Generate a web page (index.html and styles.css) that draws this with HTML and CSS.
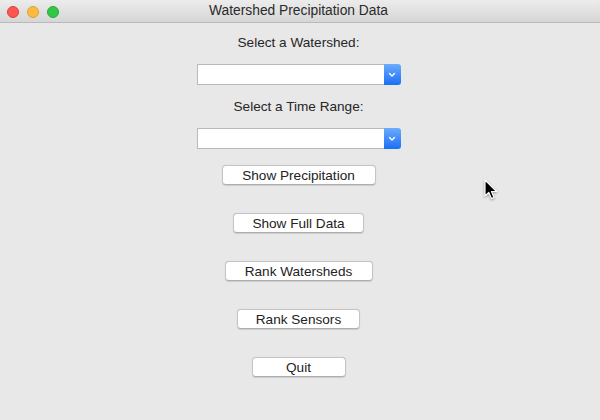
FILE: index.html
```html
<!DOCTYPE html>
<html>
<head>
<meta charset="utf-8">
<title>Watershed Precipitation Data</title>
<link rel="stylesheet" href="styles.css">
</head>
<body>
<div class="window">
  <div class="titlebar">
    <div class="lights">
      <span class="light red"></span>
      <span class="light yellow"></span>
      <span class="light green"></span>
    </div>
    <div class="title">Watershed Precipitation Data</div>
  </div>
  <div class="content">
    <div class="label first">Select a Watershed:</div>
    <div class="combo">
      <div class="combo-field"></div>
      <div class="combo-arrow">
        <svg width="8" height="6" viewBox="0 0 8 6"><path d="M1.5 1.5 L4 4 L6.5 1.5" fill="none" stroke="#fff" stroke-width="1.4" stroke-linecap="round" stroke-linejoin="round"/></svg>
      </div>
    </div>
    <div class="label second">Select a Time Range:</div>
    <div class="combo">
      <div class="combo-field"></div>
      <div class="combo-arrow">
        <svg width="8" height="6" viewBox="0 0 8 6"><path d="M1.5 1.5 L4 4 L6.5 1.5" fill="none" stroke="#fff" stroke-width="1.4" stroke-linecap="round" stroke-linejoin="round"/></svg>
      </div>
    </div>
    <div class="buttons">
      <button class="btn btn-precip">Show Precipitation</button>
      <button class="btn btn-full">Show Full Data</button>
      <button class="btn btn-rankw">Rank Watersheds</button>
      <button class="btn btn-ranks">Rank Sensors</button>
      <button class="btn btn-quit">Quit</button>
    </div>
  </div>
  <svg class="cursor" width="16" height="24" viewBox="0 0 16 24">
    <path d="M1 1 L1 17 L4.8 13.4 L7.4 19.6 L10 18.5 L7.5 12.5 L12.6 12.5 Z" fill="#000" stroke="#fff" stroke-width="1.2" stroke-linejoin="round"/>
  </svg>
</div>
</body>
</html>
```
FILE: styles.css
```css
html, body {
  margin: 0;
  padding: 0;
  background: #e8e8e8;
}
.window {
  position: relative;
  width: 600px;
  height: 420px;
  background: #e8e8e8;
  border-radius: 5px 5px 0 0;
  overflow: hidden;
  font-family: "Liberation Sans", Arial, sans-serif;
  font-size: 13.6px;
  color: #222;
}
.titlebar {
  position: relative;
  height: 22px;
  background: linear-gradient(#ececec, #d6d6d6);
  border-bottom: 1px solid #b9b9b9;
  display: flex;
  align-items: center;
  justify-content: center;
}
.lights {
  position: absolute;
  left: 7px;
  top: 6px;
  display: flex;
  gap: 8px;
}
.light {
  width: 12px;
  height: 12px;
  border-radius: 50%;
  box-sizing: border-box;
}
.red { background: #fc5753; border: 1px solid #df3d38; }
.yellow { background: #fdbc40; border: 1px solid #de9f34; }
.green { background: #33c748; border: 1px solid #27aa35; }
.title {
  font-size: 13.8px;
  color: #2a2a2a;
  line-height: 22px;
  margin-right: 3px;
}
.content {
  display: flex;
  flex-direction: column;
  align-items: center;
  padding-right: 3px;
}
.label {
  line-height: 16px;
  color: #262626;
}
.label.first { margin-top: 12px; margin-bottom: 13px; }
.label.second { margin-top: 14px; margin-bottom: 13px; }
.combo {
  display: flex;
  width: 204px;
  height: 21px;
}
.combo-field {
  flex: 1;
  background: #fff;
  border: 1px solid #b8b8b8;
  border-right: none;
  box-sizing: border-box;
}
.combo-arrow {
  width: 17px;
  background: linear-gradient(#6aacfc, #1b6ff5);
  border-radius: 0 3px 3px 0;
  display: flex;
  align-items: center;
  justify-content: center;
}
.buttons {
  margin-top: 16px;
  display: flex;
  flex-direction: column;
  align-items: center;
  gap: 28px;
}
.btn {
  height: 20px;
  padding: 0;
  background: #fff;
  border: 1px solid #c4c4c4;
  border-bottom-color: #aeaeae;
  border-radius: 4px;
  font-family: "Liberation Sans", Arial, sans-serif;
  font-size: 13.6px;
  color: #222;
  box-shadow: 0 0.5px 1px rgba(0,0,0,0.12);
}
.btn-precip { width: 154px; }
.btn-full { width: 131px; }
.btn-rankw { width: 148px; }
.btn-ranks { width: 123px; }
.btn-quit { width: 94px; }
.cursor {
  position: absolute;
  left: 484px;
  top: 179px;
  filter: drop-shadow(0 1px 1px rgba(0,0,0,0.35));
}
```
